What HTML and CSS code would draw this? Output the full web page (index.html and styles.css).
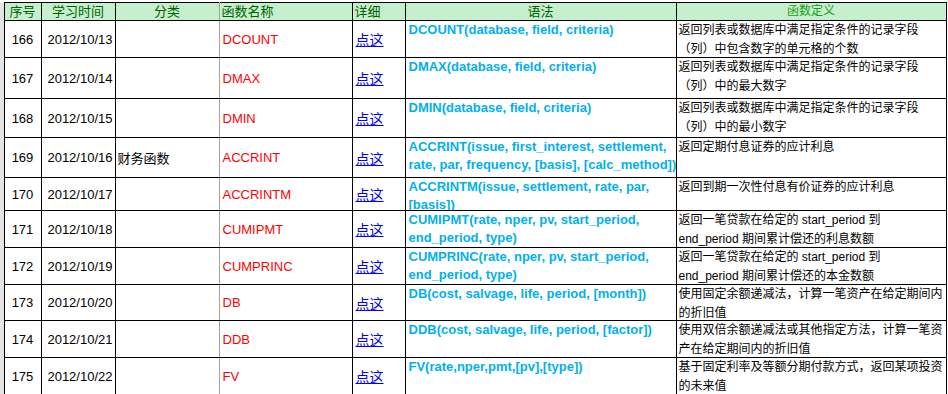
FILE: index.html
```html
<!DOCTYPE html>
<html lang="zh-CN">
<head>
    <meta charset="UTF-8">
    <title>财务函数学习表</title>
    <link rel="stylesheet" href="styles.css">
</head>
<body>
    <table class="sheet">
        <colgroup>
            <col class="c-gutter">
            <col class="c-no">
            <col class="c-date">
            <col class="c-cat">
            <col class="c-name">
            <col class="c-link">
            <col class="c-syntax">
            <col class="c-def">
        </colgroup>
        <thead>
            <tr>
                <th class="gutter"></th>
                <th>序号</th>
                <th>学习时间</th>
                <th class="cat">分类</th>
                <th class="left">函数名称</th>
                <th class="left">详细</th>
                <th>语法</th>
                <th class="def-head">函数定义</th>
            </tr>
        </thead>
        <tbody>
            <tr>
                <td class="gutter"></td>
                <td class="no">166</td>
                <td class="date">2012/10/13</td>
                <td class="cat"></td>
                <td class="name">DCOUNT</td>
                <td class="link"><a href="#">点这</a></td>
                <td class="syntax"><div class="clip">DCOUNT(database, field, criteria)</div></td>
                <td class="def"><div class="clip">返回列表或数据库中满足指定条件的记录字段<br>（列）中包含数字的单元格的个数</div></td>
            </tr>
            <tr>
                <td class="gutter"></td>
                <td class="no">167</td>
                <td class="date">2012/10/14</td>
                <td class="cat"></td>
                <td class="name">DMAX</td>
                <td class="link"><a href="#">点这</a></td>
                <td class="syntax"><div class="clip">DMAX(database, field, criteria)</div></td>
                <td class="def"><div class="clip">返回列表或数据库中满足指定条件的记录字段<br>（列）中的最大数字</div></td>
            </tr>
            <tr>
                <td class="gutter"></td>
                <td class="no">168</td>
                <td class="date">2012/10/15</td>
                <td class="cat"></td>
                <td class="name">DMIN</td>
                <td class="link"><a href="#">点这</a></td>
                <td class="syntax"><div class="clip">DMIN(database, field, criteria)</div></td>
                <td class="def"><div class="clip">返回列表或数据库中满足指定条件的记录字段<br>（列）中的最小数字</div></td>
            </tr>
            <tr>
                <td class="gutter"></td>
                <td class="no">169</td>
                <td class="date">2012/10/16</td>
                <td class="cat">财务函数</td>
                <td class="name">ACCRINT</td>
                <td class="link"><a href="#">点这</a></td>
                <td class="syntax"><div class="clip">ACCRINT(issue, first_interest, settlement,<br>rate, par, frequency, [basis], [calc_method])</div></td>
                <td class="def"><div class="clip">返回定期付息证券的应计利息</div></td>
            </tr>
            <tr>
                <td class="gutter"></td>
                <td class="no">170</td>
                <td class="date">2012/10/17</td>
                <td class="cat"></td>
                <td class="name">ACCRINTM</td>
                <td class="link"><a href="#">点这</a></td>
                <td class="syntax"><div class="clip">ACCRINTM(issue, settlement, rate, par,<br>[basis])</div></td>
                <td class="def"><div class="clip">返回到期一次性付息有价证券的应计利息</div></td>
            </tr>
            <tr>
                <td class="gutter"></td>
                <td class="no">171</td>
                <td class="date">2012/10/18</td>
                <td class="cat"></td>
                <td class="name">CUMIPMT</td>
                <td class="link"><a href="#">点这</a></td>
                <td class="syntax"><div class="clip">CUMIPMT(rate, nper, pv, start_period,<br>end_period, type)</div></td>
                <td class="def"><div class="clip">返回一笔贷款在给定的 start_period 到<br>end_period 期间累计偿还的利息数额</div></td>
            </tr>
            <tr>
                <td class="gutter"></td>
                <td class="no">172</td>
                <td class="date">2012/10/19</td>
                <td class="cat"></td>
                <td class="name">CUMPRINC</td>
                <td class="link"><a href="#">点这</a></td>
                <td class="syntax"><div class="clip">CUMPRINC(rate, nper, pv, start_period,<br>end_period, type)</div></td>
                <td class="def"><div class="clip">返回一笔贷款在给定的 start_period 到<br>end_period 期间累计偿还的本金数额</div></td>
            </tr>
            <tr>
                <td class="gutter"></td>
                <td class="no">173</td>
                <td class="date">2012/10/20</td>
                <td class="cat"></td>
                <td class="name">DB</td>
                <td class="link"><a href="#">点这</a></td>
                <td class="syntax"><div class="clip">DB(cost, salvage, life, period, [month])</div></td>
                <td class="def"><div class="clip">使用固定余额递减法，计算一笔资产在给定期间内<br>的折旧值</div></td>
            </tr>
            <tr>
                <td class="gutter"></td>
                <td class="no">174</td>
                <td class="date">2012/10/21</td>
                <td class="cat"></td>
                <td class="name">DDB</td>
                <td class="link"><a href="#">点这</a></td>
                <td class="syntax"><div class="clip">DDB(cost, salvage, life, period, [factor])</div></td>
                <td class="def"><div class="clip">使用双倍余额递减法或其他指定方法，计算一笔资<br>产在给定期间内的折旧值</div></td>
            </tr>
            <tr>
                <td class="gutter"></td>
                <td class="no">175</td>
                <td class="date">2012/10/22</td>
                <td class="cat"></td>
                <td class="name">FV</td>
                <td class="link"><a href="#">点这</a></td>
                <td class="syntax"><div class="clip">FV(rate,nper,pmt,[pv],[type])</div></td>
                <td class="def"><div class="clip">基于固定利率及等额分期付款方式，返回某项投资<br>的未来值</div></td>
            </tr>
        </tbody>
    </table>
</body>
</html>
```

FILE: styles.css
```css
body {
    margin: 0;
    padding-top: 2px;
    background: #fff;
    font-family: "Liberation Sans", "Noto Sans CJK SC", sans-serif;
    font-size: 13px;
    color: #000;
    overflow: hidden;
}
.sheet {
    border-collapse: collapse;
    table-layout: fixed;
    width: 946px;
}
.c-gutter { width: 4px; }
.c-no { width: 37px; }
.c-date { width: 74px; }
.c-cat { width: 104px; }
.c-name { width: 133px; }
.c-link { width: 53px; }
.c-syntax { width: 271px; }
.c-def { width: 270px; }

.sheet th,
.sheet td {
    border: 1px solid #000;
    padding: 0 2px;
    white-space: nowrap;
    overflow: hidden;
    vertical-align: middle;
}
.sheet th {
    height: 17px;
    background: #c6efce;
    color: #006100;
    font-weight: normal;
    font-size: 13px;
    line-height: 17px;
    text-align: center;
}
.sheet th.left { text-align: left; }
.sheet th.def-head {
    font-size: 12px;
    color: #15a015;
}
.sheet .gutter {
    padding: 0;
    background: #e4e4e4;
    border-top: none;
    border-left: none;
    border-bottom: none;
}
.sheet th.cat,
.sheet td.cat { border-right-color: #a0a0a0; }

/* excel row heights, text taller than the row is clipped */
.sheet tbody tr { height: 37px; }
.sheet tbody tr:nth-child(2) { height: 41px; }
.sheet tbody tr:nth-child(3) { height: 39px; }
.sheet tbody tr:nth-child(4) { height: 40px; }
.sheet tbody tr:nth-child(5) { height: 33px; }
.sheet tbody tr:nth-child(8) { height: 36px; }
.clip { margin-bottom: -12px; }

.sheet .no { text-align: center; }
.sheet .date { text-align: right; }
.sheet .name {
    color: #ff0000;
    padding-left: 3px;
}
.sheet .link { padding-left: 3px; }
.link a {
    color: #0000ff;
    font-size: 14px;
    text-decoration: underline;
}
.sheet .syntax {
    vertical-align: top;
    padding-left: 3px;
    color: #00b0f0;
    font-weight: bold;
    line-height: 18px;
}
.sheet .def {
    vertical-align: top;
    padding-left: 2px;
    font-size: 12px;
    line-height: 19px;
}
```
